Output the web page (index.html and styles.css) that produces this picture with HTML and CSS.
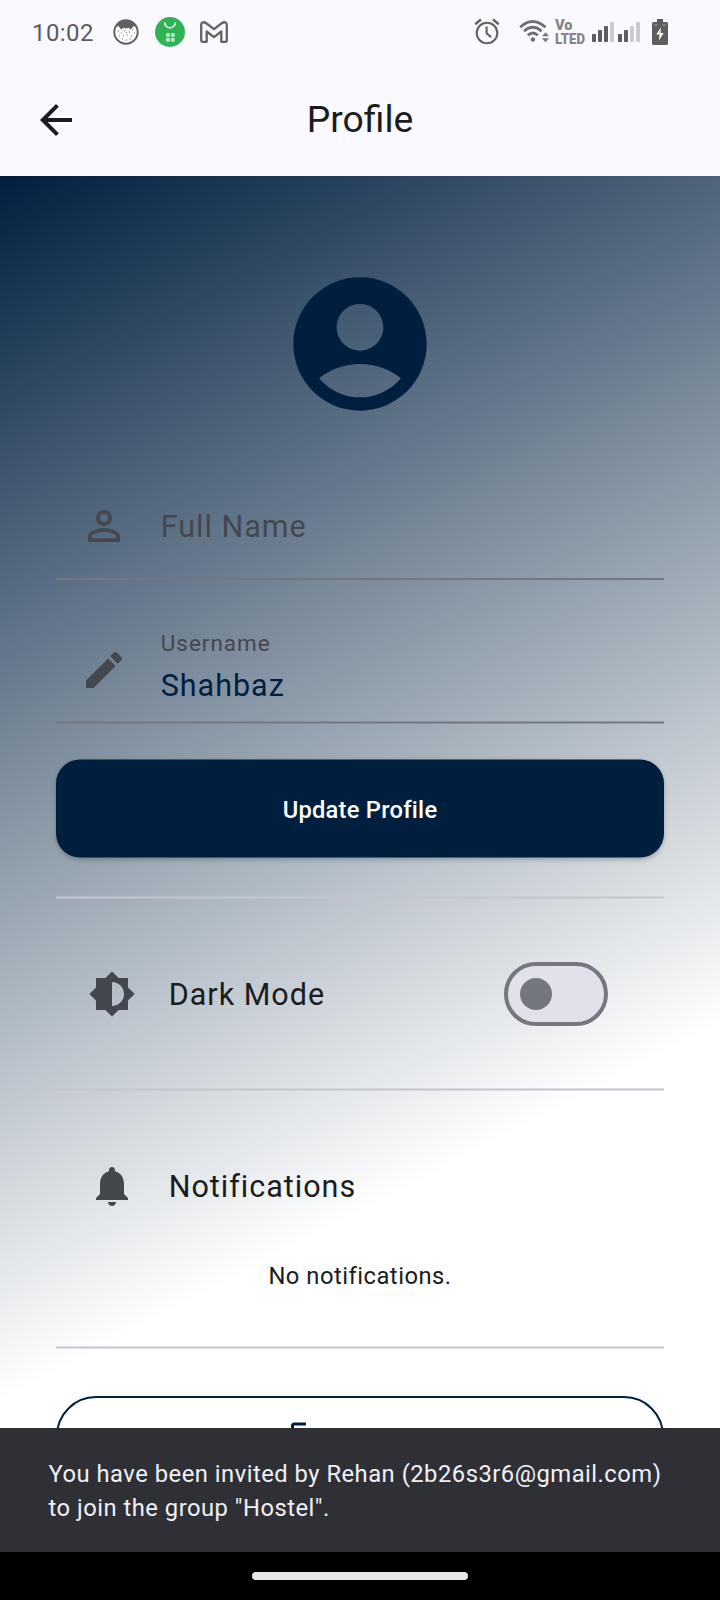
FILE: index.html
```html
<!DOCTYPE html>
<html lang="en">
<head>
<meta charset="utf-8">
<title>Profile</title>
<link rel="stylesheet" href="styles.css">
</head>
<body>
<div class="screen">
  <header class="status">
    <span class="time">10:02</span>
    <svg class="st-face" width="26" height="26" viewBox="0 0 26 26">
      <circle cx="13" cy="13" r="11.7" fill="#fafafa" stroke="#606060" stroke-width="1.9"/>
      <path d="M3 8 Q6 1.3 13 1.3 Q20 1.3 23 8 L20.5 7 L18 10.5 L15.5 8.8 L13 9.6 L10.5 8.8 L8 10.5 L5.5 7Z" fill="#606060"/>
      <path d="M5 12h1M8 14h1M11 12h1M16 13h1M19 11h1M6 17h1M10 17h1M14 16h1M18 17h1M21 14h1M9 20h1M13 21h1M17 20h1M13 13.5h1" stroke="#777" stroke-width="1"/>
    </svg>
    <svg class="st-green" width="30" height="30" viewBox="0 0 30 30">
      <circle cx="15" cy="15" r="15" fill="#32b257"/>
      <path d="M9.7 5.5a5.3 5.3 0 0 0 10.6 0" fill="none" stroke="#dff5e5" stroke-width="1.7"/>
      <g fill="#b9e8c6"><rect x="11" y="16" width="4" height="4" rx="1.4"/><rect x="15.8" y="16" width="4" height="4" rx="1.4"/><rect x="11" y="20.8" width="4" height="4" rx="1.4"/><rect x="15.8" y="20.8" width="4" height="4" rx="1.4"/></g>
    </svg>
    <svg class="st-mail" width="28" height="22" viewBox="0 0 28 22" fill="none" stroke="#636363" stroke-width="2.3" stroke-linejoin="round">
      <path d="M1.200 3.800C1.200 1.200 4 .6 6 2L14 8.200 22 2c2-1.400 4.800-.8 4.800 1.800V19.300q0 1.500-1.500 1.500H21.300V10.500l-7.300 5.700-7.300-5.700V20.800H2.700Q1.200 20.800 1.200 19.300Z"/>
    </svg>
    <span class="grow"></span>
    <svg class="st-alarm" width="26" height="28" viewBox="0 0 26 28" fill="none" stroke="#626262">
      <circle cx="13" cy="15" r="10.3" stroke-width="2.1"/>
      <path d="M12.600 8.500v6.800l4.500 3.800" stroke-width="2.100"/>
      <path d="M1.200 6.200 7 1.500M24.800 6.200 19 1.500" stroke-width="2.400"/>
    </svg>
    <svg class="st-wifi" width="31" height="26" viewBox="0 0 31 26" fill="none" stroke="#707070" stroke-width="2.800">
      <path d="M1.200 8.200Q13.500-3.200 26.500 8.200M5 12.200q8.700-7.800 17.600 0M8.800 16.200q5-4.400 10 0"/>
      <circle cx="13.900" cy="20.500" r="2.200" fill="#707070" stroke="none"/>
      <path d="M23 17.200l3.500-4 3.500 4zM23 19.200l3.500 4 3.500-4z" fill="#777" stroke="none"/>
    </svg>
    <svg class="st-lte" width="31" height="28" viewBox="0 0 31 28">
      <text x="0" y="12.300" textLength="17.500" lengthAdjust="spacingAndGlyphs">Vo</text>
      <text x="0" y="25.700" textLength="30" lengthAdjust="spacingAndGlyphs">LTED</text>
    </svg>
    <svg class="st-sig" width="22" height="20" viewBox="0 0 22 20" fill="#5d5d5d">
      <rect y="12" width="4" height="8" rx=".8"/><rect x="6" y="8" width="4" height="12" rx=".8"/><rect x="12" y="4" width="4" height="16" rx=".8"/><rect x="18" width="4" height="20" rx=".8" fill="#cbcacf"/>
    </svg>
    <svg class="st-sig2" width="22" height="20" viewBox="0 0 22 20" fill="#5d5d5d">
      <rect y="12" width="4" height="8" rx=".8"/><rect x="6" y="8" width="4" height="12" rx=".8"/><rect x="12" y="4" width="4" height="16" rx=".8" fill="#cbcacf"/><rect x="18" width="4" height="20" rx=".8" fill="#cbcacf"/>
    </svg>
    <svg class="st-bat" width="16" height="26" viewBox="0 0 16 26">
      <path d="M5 0h6v3h3.500Q16 3 16 4.500v20q0 1.500-1.500 1.500h-13Q0 26 0 24.500v-20Q0 3 1.500 3H5z" fill="#5e5e5e"/>
      <path d="M2.500 6h3M10.500 6h3" stroke="#aaa" stroke-width="1"/>
      <path d="M8.800 8.500 4.300 15.500h3.200L7 21.500l4.700-7.500H8.500z" fill="#fff"/>
    </svg>
  </header>

  <div class="appbar">
    <svg class="back" width="48" height="48" viewBox="0 0 24 24"><path d="M20 11H7.830l5.590-5.590L12 4l-8 8 8 8 1.410-1.410L7.830 13H20v-2z"/></svg>
    <h1 class="title">Profile</h1>
  </div>

  <main class="content">
    <svg class="avatar" width="160" height="160" viewBox="0 0 24 24"><path d="M12 2C6.480 2 2 6.480 2 12s4.480 10 10 10 10-4.480 10-10S17.520 2 12 2zm0 4c1.930 0 3.500 1.570 3.500 3.500S13.930 13 12 13s-3.500-1.570-3.500-3.500S10.070 6 12 6zm0 14c-2.030 0-4.430-.820-6.140-2.880C7.550 15.800 9.680 15 12 15s4.450.8 6.140 2.120C16.430 19.180 14.030 20 12 20z"/></svg>

    <div class="field field-empty">
      <svg class="icon" width="48" height="48" viewBox="0 0 24 24"><path d="M12 5.900c1.160 0 2.100.940 2.100 2.100s-.940 2.100-2.100 2.100S9.900 9.160 9.900 8s.940-2.100 2.100-2.100m0 9c2.970 0 6.100 1.460 6.100 2.100v1.100H5.900V17c0-.640 3.130-2.100 6.100-2.100M12 4C9.790 4 8 5.790 8 8s1.790 4 4 4 4-1.790 4-4-1.790-4-4-4zm0 9c-2.670 0-8 1.340-8 4v3h16v-3c0-2.660-5.330-4-8-4z"/></svg>
      <span class="hint">Full Name</span>
    </div>
    <div class="field">
      <svg class="icon" width="48" height="48" viewBox="0 0 24 24"><path d="M3 17.250V21h3.750L17.810 9.940l-3.750-3.750L3 17.250zM20.710 7.040c.390-.390.390-1.020 0-1.410l-2.340-2.340c-.390-.390-1.020-.390-1.410 0l-1.830 1.830 3.750 3.750 1.830-1.830z"/></svg>
      <div class="labelled">
        <span class="label">Username</span>
        <span class="value">Shahbaz</span>
      </div>
    </div>
    <div class="line line-soft"></div>

    <div class="update">Update Profile</div>
    <div class="line divider"></div>

    <div class="tile">
      <svg class="icon" width="48" height="48" viewBox="0 0 24 24"><path d="M20 15.310L23.310 12 20 8.690V4h-4.690L12 .690 8.690 4H4v4.690L.690 12 4 15.310V20h4.690L12 23.310 15.310 20H20v-4.690zM12 18V6c3.310 0 6 2.690 6 6s-2.690 6-6 6z"/></svg>
      <span class="tile-text">Dark Mode</span>
      <span class="switch"><span class="thumb"></span></span>
    </div>
    <div class="line divider"></div>

    <div class="tile">
      <svg class="icon" width="48" height="48" viewBox="0 0 24 24"><path d="M12 22c1.100 0 2-.9 2-2h-4c0 1.100.890 2 2 2zm6-6v-5c0-3.070-1.640-5.640-4.500-6.320V4c0-.830-.670-1.500-1.500-1.500s-1.500.670-1.500 1.500v.680C7.630 5.360 6 7.920 6 11v5l-2 2v1h16v-1l-2-2z"/></svg>
      <span class="tile-text">Notifications</span>
    </div>
    <p class="none">No notifications.</p>
    <div class="line divider"></div>

    <div class="outlined">
      <svg width="36" height="36" viewBox="0 0 24 24"><path d="M17 7l-1.410 1.410L18.170 11H8v2h10.170l-2.580 2.580L17 17l5-5zM4 5h8V3H4c-1.100 0-2 .9-2 2v14c0 1.100.9 2 2 2h8v-2H4V5z"/></svg>
    </div>
  </main>

  <div class="snackbar">You have been invited by Rehan (2b26s3r6@gmail.com) to join the group "Hostel".</div>
  <footer class="nav"><span class="pill"></span></footer>
</div>
</body>
</html>
```
FILE: styles.css
```css
* { box-sizing: border-box; }
body { margin: 0; font-family: Roboto, "Liberation Sans", sans-serif; color: #1a1c20; }
svg { display: block; flex: none; }
.screen { position: relative; width: 720px; height: 1600px; overflow: hidden; display: flex; flex-direction: column; background: #faf9ff; }

.status { height: 64px; flex: none; display: flex; align-items: center; padding: 0 52px 0 32px; }
.time { width: 81px; font-size: 24px; color: #5c5c5c; letter-spacing: .4px; line-height: 30px; padding-top: 2px; }
.st-green { margin-left: 16px; }
.st-mail { margin-left: 15px; }
.grow { flex: 1; }
.st-alarm { margin-right: 19px; }
.st-wifi { margin-right: 5px; }
.st-lte { margin-right: 6px; overflow: visible; }
.st-lte text { font: 900 15.500px Roboto, sans-serif; fill: #858585; }
.st-sig { margin-right: 4px; }
.st-sig2 { margin-right: 12px; }

.appbar { height: 112px; flex: none; display: grid; grid-template-columns: 48px 1fr 48px; align-items: center; padding: 0 32px; }
.back { fill: #1a1c20; }
.title { margin: 0; padding-bottom: 2px; text-align: center; font-size: 37.300px; font-weight: 400; line-height: 48px; }

.content { height: 1376px; flex: none; overflow: hidden; padding: 87.700px 56px 0; display: flex; flex-direction: column; background: linear-gradient(152.380deg, #001f3f 0%, #fff 70%); }
.content > * { flex: none; }
.avatar { align-self: center; fill: #001f3f; margin-bottom: 48.300px; }
.icon { fill: #44474e; }

.field { height: 108px; display: flex; align-items: center; padding: 0 24px; gap: 32.700px; }
.field-empty { border-bottom: 2px solid #74777f; padding-top: 2px; margin-bottom: 36px; }
.field + .field { height: 105px; padding-top: 3px; }
.hint, .value { font-size: 30.500px; letter-spacing: 1px; line-height: 40px; color: #44474e; }
.hint { padding-top: 2px; }
.labelled { display: flex; flex-direction: column; padding-bottom: 3px; }
.label { font-size: 22.500px; letter-spacing: 1px; line-height: 28px; color: #44474e; }
.value { color: #001f3f; line-height: 44px; margin-top: 7px; }

/* hairlines sit on half pixels: one solid row between two half-tone rows */
.line { height: 3px; background: linear-gradient(var(--half) 1px, var(--full) 1px 2px, var(--half) 2px); }
.line-soft { --full: #74777f; --half: #74777f80; }
.divider { --full: #c4c6cf; --half: #c4c6cf80; }

.update { height: 98px; margin: 36px 0 38px; transform: translateY(-.5px); border-radius: 24px; background: #001f3f; color: #fff; display: flex; align-items: center; justify-content: center; font-size: 23.700px; font-weight: 500; letter-spacing: .25px; padding-top: 3px; box-shadow: 0 2px 4px rgba(0, 0, 0, .22); }

.tile { display: flex; align-items: center; height: 189px; padding: 1px 56px 0 32px; gap: 32.700px; }
.tile-text { flex: 1; font-size: 30.500px; letter-spacing: 1px; line-height: 40px; padding-top: 3px; }
.switch { width: 104px; height: 64px; border: 4px solid #74777f; border-radius: 32px; background: #e1e1eb; display: flex; align-items: center; padding-left: 12px; }
.thumb { width: 32px; height: 32px; border-radius: 50%; background: #74777f; }
.none { margin: -20px 0 54px; text-align: center; font-size: 23.750px; line-height: 32px; letter-spacing: .500px; }

.outlined { height: 96px; margin-top: 47px; border: 2px solid #001f3f; border-radius: 40px; padding: 20px 0 0 230px; }
.outlined svg { fill: #001f3f; }

.snackbar { position: absolute; left: 0; right: 0; bottom: 48px; height: 124px; padding: 29px 46px 0 48.500px; background: #2f3036; color: #f0f0f7; font-size: 23.750px; line-height: 34px; letter-spacing: .500px; }
.nav { height: 48px; flex: none; display: flex; align-items: center; justify-content: center; background: #000; }
.pill { width: 216px; height: 8px; border-radius: 4px; background: #e8e8e8; }
```
